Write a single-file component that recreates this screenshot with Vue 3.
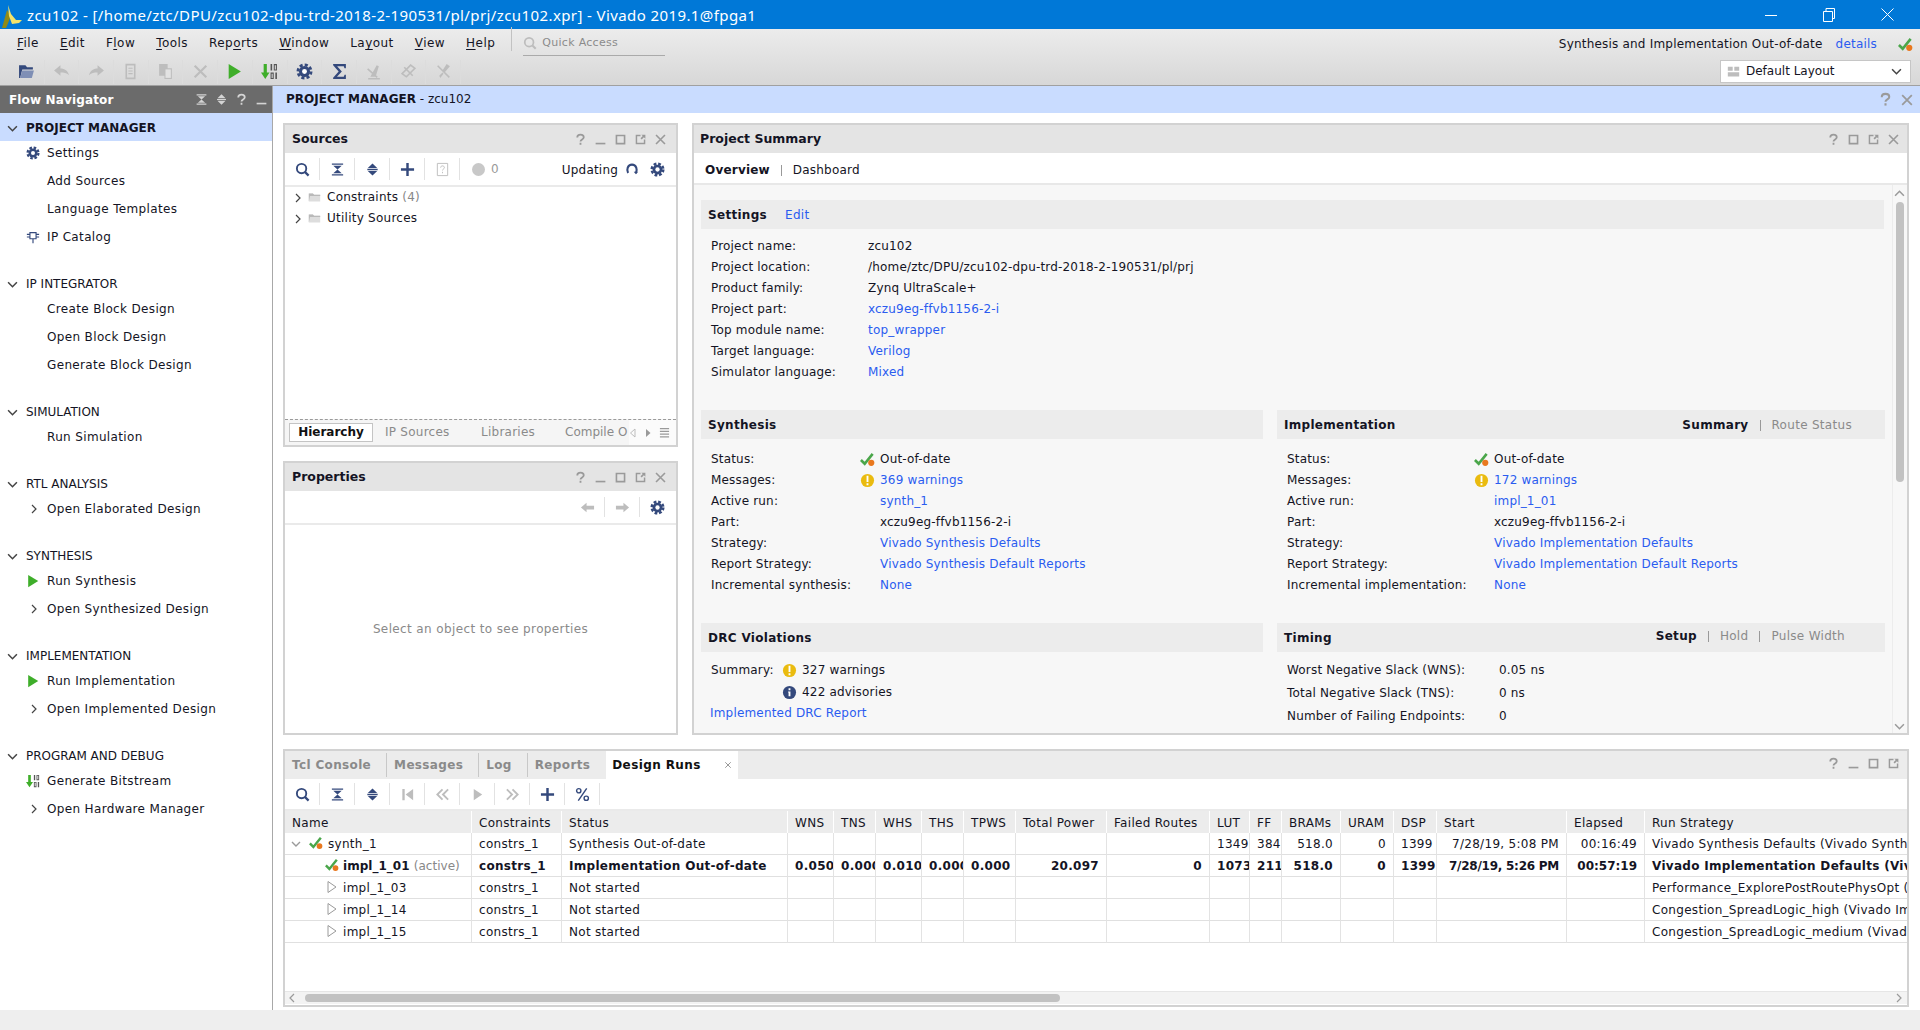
<script setup>
const menus = [
  ['', 'F', 'ile'], ['', 'E', 'dit'], ['F', 'l', 'ow'], ['', 'T', 'ools'], ['Rep', 'o', 'rts'],
  ['', 'W', 'indow'], ['La', 'y', 'out'], ['', 'V', 'iew'], ['', 'H', 'elp']
]
const tools = [
  ['folder2', 'navy'], ['undo', 'mute'], ['redo', 'mute'], ['copy', 'mute'], ['paste', 'mute'], ['close', 'mute'],
  ['play', 'green'], ['bits', 'green'], ['gear', 'navy'], ['sigma', 'navy'], ['tool1', 'mute'], ['tool2', 'mute'], ['tool3', 'mute']
]
const nav = [
  { title: 'PROJECT MANAGER', active: true, items: [
    { label: 'Settings', icon: 'gear', cls: 'navy' }, { label: 'Add Sources' }, { label: 'Language Templates' },
    { label: 'IP Catalog', icon: 'ip', cls: 'navy' }] },
  { title: 'IP INTEGRATOR', items: [{ label: 'Create Block Design' }, { label: 'Open Block Design' }, { label: 'Generate Block Design' }] },
  { title: 'SIMULATION', items: [{ label: 'Run Simulation' }] },
  { title: 'RTL ANALYSIS', items: [{ label: 'Open Elaborated Design', chev: true }] },
  { title: 'SYNTHESIS', items: [{ label: 'Run Synthesis', icon: 'play', cls: 'green' }, { label: 'Open Synthesized Design', chev: true }] },
  { title: 'IMPLEMENTATION', items: [{ label: 'Run Implementation', icon: 'play', cls: 'green' }, { label: 'Open Implemented Design', chev: true }] },
  { title: 'PROGRAM AND DEBUG', items: [{ label: 'Generate Bitstream', icon: 'bits', cls: 'green' }, { label: 'Open Hardware Manager', chev: true }] }
]
const settings = [
  ['Project name:', 'zcu102'],
  ['Project location:', '/home/ztc/DPU/zcu102-dpu-trd-2018-2-190531/pl/prj'],
  ['Product family:', 'Zynq UltraScale+'],
  ['Project part:', 'xczu9eg-ffvb1156-2-i', true],
  ['Top module name:', 'top_wrapper', true],
  ['Target language:', 'Verilog', true],
  ['Simulator language:', 'Mixed', true]
]
const synth = [
  ['Status:', 'Out-of-date', false, 'check'],
  ['Messages:', '369 warnings', true, 'warn'],
  ['Active run:', 'synth_1', true],
  ['Part:', 'xczu9eg-ffvb1156-2-i'],
  ['Strategy:', 'Vivado Synthesis Defaults', true],
  ['Report Strategy:', 'Vivado Synthesis Default Reports', true],
  ['Incremental synthesis:', 'None', true]
]
const impl = [
  ['Status:', 'Out-of-date', false, 'check'],
  ['Messages:', '172 warnings', true, 'warn'],
  ['Active run:', 'impl_1_01', true],
  ['Part:', 'xczu9eg-ffvb1156-2-i'],
  ['Strategy:', 'Vivado Implementation Defaults', true],
  ['Report Strategy:', 'Vivado Implementation Default Reports', true],
  ['Incremental implementation:', 'None', true]
]
const timing = [
  ['Worst Negative Slack (WNS):', '0.05 ns'],
  ['Total Negative Slack (TNS):', '0 ns'],
  ['Number of Failing Endpoints:', '0']
]
const cols = [187, 90, 226, 46, 42, 46, 42, 52, 91, 103, 40, 32, 59, 53, 43, 130, 78, 270]
const heads = ['Name', 'Constraints', 'Status', 'WNS', 'TNS', 'WHS', 'THS', 'TPWS', 'Total Power', 'Failed Routes', 'LUT', 'FF', 'BRAMs', 'URAM', 'DSP', 'Start', 'Elapsed', 'Run Strategy']
const rightCols = new Set([3, 4, 5, 6, 7, 8, 9, 10, 11, 12, 13, 14, 15, 16])
const runs = [
  { name: 'synth_1', kind: 'synth', vals: ['constrs_1', 'Synthesis Out-of-date', '', '', '', '', '', '', '', '1349', '384', '518.0', '0', '1399', '7/28/19, 5:08 PM', '00:16:49', 'Vivado Synthesis Defaults (Vivado Synthesis 2019)'] },
  { name: 'impl_1_01', kind: 'active', vals: ['constrs_1', 'Implementation Out-of-date', '0.050', '0.000', '0.010', '0.000', '0.000', '20.097', '0', '1073', '211', '518.0', '0', '1399', '7/28/19, 5:26 PM', '00:57:19', 'Vivado Implementation Defaults (Vivado Implementation 2019)'] },
  { name: 'impl_1_03', kind: 'idle', vals: ['constrs_1', 'Not started', '', '', '', '', '', '', '', '', '', '', '', '', '', '', 'Performance_ExplorePostRoutePhysOpt (Vivado Implementation 2019)'] },
  { name: 'impl_1_14', kind: 'idle', vals: ['constrs_1', 'Not started', '', '', '', '', '', '', '', '', '', '', '', '', '', '', 'Congestion_SpreadLogic_high (Vivado Implementation 2019)'] },
  { name: 'impl_1_15', kind: 'idle', vals: ['constrs_1', 'Not started', '', '', '', '', '', '', '', '', '', '', '', '', '', '', 'Congestion_SpreadLogic_medium (Vivado Implementation 2019)'] }
]
const runTools = [
  ['search', 'navy'], ['collapse', 'navy'], ['expand', 'navy'], ['first', 'mute'], ['rew', 'mute'], ['playo', 'mute'], ['ffw', 'mute'], ['plus', 'navy'], ['percent', 'navy']
]
const srcTools = [['search', 'navy'], ['collapse', 'navy'], ['expand', 'navy'], ['plus', 'navy'], ['docq', 'mute']]
</script>

<template>
  <div class="app">
    <svg class="defs" aria-hidden="true">
      <symbol id="search" viewBox="0 0 16 16"><circle cx="7" cy="7" r="5" fill="none" stroke="currentColor" stroke-width="2"/><path d="M10.5 10.5L14.5 14.5" stroke="currentColor" stroke-width="2.4"/></symbol>
      <symbol id="collapse" viewBox="0 0 16 16"><path fill="currentColor" d="M2 1.5h12V3H2zM3.5 4h9L8 8zM8 8l4.5 4h-9zM2 13h12v1.5H2z"/></symbol>
      <symbol id="expand" viewBox="0 0 16 16"><path fill="currentColor" d="M8 1.5L13 6.5H3zM2.5 7.3h11v1.4h-11zM3 9.5h10L8 14.5z"/></symbol>
      <symbol id="plus" viewBox="0 0 16 16"><path fill="currentColor" d="M6.7 1h2.6v5.7H15v2.6H9.3V15H6.7V9.3H1V6.7h5.7z"/></symbol>
      <symbol id="gear" viewBox="0 0 16 16"><circle cx="8" cy="8" r="5.2" fill="currentColor"/><circle cx="8" cy="8" r="6.2" fill="none" stroke="currentColor" stroke-width="2.6" stroke-dasharray="2.9 1.97"/><circle cx="8" cy="8" r="2.3" fill="#fff"/></symbol>
      <symbol id="ip" viewBox="0 0 16 16"><path fill="none" stroke="currentColor" stroke-width="1.3" d="M4.5 3h7v7h-7zM8 10v5M1 5h3.500M1 8h3.500M11.500 5H15M11.500 8H15"/></symbol>
      <symbol id="play" viewBox="0 0 16 16"><path fill="currentColor" d="M2.500 1L14 8L2.500 15z"/></symbol>
      <symbol id="playo" viewBox="0 0 16 16"><path fill="currentColor" d="M4 2l9 6-9 6z"/></symbol>
      <symbol id="bits" viewBox="0 0 16 16"><path fill="currentColor" d="M2.500 1h3v8H8l-4 6-4-6h2.500z"/><path fill="#555" d="M9 1h1.500v6H9zM12 1h3v6h-3zM13 2v4h1V2zM9 9h3v6H9zM10 10v4h1v-4zM13.500 9H15v6h-1.500z"/></symbol>
      <symbol id="sigma" viewBox="0 0 16 16"><path fill="currentColor" d="M2 1h12v4h-1.300l-.7-2H5.800l4.400 5-4.600 5H12l.8-2H14v4H2v-1.200L7.200 8 2 2.200z"/></symbol>
      <symbol id="undo" viewBox="0 0 16 16"><path fill="currentColor" d="M1 7l6-5v3.200c4 0 7 2 8 6.300C13 9.500 10 9 7 9v3z"/></symbol>
      <symbol id="redo" viewBox="0 0 16 16"><path fill="currentColor" d="M15 7L9 2v3.200c-4 0-7 2-8 6.300C3 9.500 6 9 9 9v3z"/></symbol>
      <symbol id="copy" viewBox="0 0 16 16"><path fill="none" stroke="currentColor" stroke-width="1.500" d="M4 1.500h8v13H4z"/><path stroke="currentColor" d="M6 5h4M6 7.500h4M6 10h4"/></symbol>
      <symbol id="paste" viewBox="0 0 16 16"><path fill="currentColor" d="M2 1h8v4h4v10H7v-3H2z"/><path fill="#e2e2e2" d="M8 6h5v8H8z"/></symbol>
      <symbol id="close" viewBox="0 0 16 16"><path stroke="currentColor" stroke-width="2" fill="none" d="M2.500 2.500l11 11M13.500 2.500l-11 11"/></symbol>
      <symbol id="tool1" viewBox="0 0 16 16"><path fill="currentColor" d="M3 14h11v1.500H3zM5 13L11 2l2 1-3 10zM3 5l9 8-1 1-9-8z"/></symbol>
      <symbol id="tool2" viewBox="0 0 16 16"><path fill="none" stroke="currentColor" stroke-width="1.500" d="M2 10L10 2l4 3-8 8zM4 4l8 8"/></symbol>
      <symbol id="tool3" viewBox="0 0 16 16"><path fill="currentColor" d="M2 3l1-1 11 11-1 1zM11 1l3 2-5 6-2-2zM4 12l3-3 1 1-3 4z"/></symbol>
      <symbol id="help" viewBox="0 0 16 16"><path fill="none" stroke="currentColor" stroke-width="2.200" d="M4 5.500C4 3 5.800 2 8 2s4 1.200 4 3.300c0 2.700-4 2.500-4 5.200"/><path stroke="currentColor" stroke-width="2.200" d="M8 12v2.500"/></symbol>
      <symbol id="min" viewBox="0 0 16 16"><path fill="currentColor" d="M2 12h12v2H2z"/></symbol>
      <symbol id="max" viewBox="0 0 16 16"><path fill="none" stroke="currentColor" stroke-width="2" d="M3 3h10v10H3z"/></symbol>
      <symbol id="pop" viewBox="0 0 16 16"><path fill="none" stroke="currentColor" stroke-width="1.800" d="M8 3H3v10h10V8"/><path fill="currentColor" d="M9 2h5v5l-1.800-1.800L9.500 8 8 6.500l2.800-2.700z"/></symbol>
      <symbol id="check" viewBox="0 0 16 16"><path fill="none" stroke="#4aa64a" stroke-width="2.800" d="M1 8.500l4 4L13.500 2"/><circle cx="12" cy="11.500" r="3.300" fill="#e9781e"/></symbol>
      <symbol id="warn" viewBox="0 0 16 16"><circle cx="8" cy="8" r="7" fill="#eabb0f"/><path fill="#fff" d="M7 3h2v6.500H7zM7 11h2v2H7z"/></symbol>
      <symbol id="info" viewBox="0 0 16 16"><circle cx="8" cy="8" r="7" fill="#34497c"/><path fill="#fff" d="M7 3.500h2v2H7zM6.500 7H9v5H7V8h-.5z"/></symbol>
      <symbol id="folder" viewBox="0 0 16 16"><path fill="#ddd" d="M1 3h5l1.500 1.500H15V13H1z"/><path fill="#b9b9b9" d="M1 3h5l1.500 1.500H15V6H2.500L1 13z"/></symbol>
      <symbol id="folder2" viewBox="0 0 16 16"><path fill="#34497c" d="M1 2h6l1.500 2H14v2H4L2 14H1z"/><path fill="#7f8fb5" d="M4 7h11l-2 7H2z"/></symbol>
      <symbol id="chevr" viewBox="0 0 10 10"><path fill="none" stroke="currentColor" stroke-width="1.200" d="M3 1l4 4-4 4"/></symbol>
      <symbol id="chevd" viewBox="0 0 10 10"><path fill="none" stroke="currentColor" stroke-width="1.400" d="M1 3l4 4 4-4"/></symbol>
      <symbol id="chevu" viewBox="0 0 10 10"><path fill="none" stroke="currentColor" stroke-width="1.400" d="M1 7l4-4 4 4"/></symbol>
      <symbol id="first" viewBox="0 0 16 16"><path fill="currentColor" d="M2.500 2H5v12H2.500zM14 2v12L6 8z"/></symbol>
      <symbol id="rew" viewBox="0 0 16 16"><path fill="none" stroke="currentColor" stroke-width="2" d="M8 2.500L2.500 8 8 13.500M14 2.500L8.500 8l5.500 5.500"/></symbol>
      <symbol id="ffw" viewBox="0 0 16 16"><path fill="none" stroke="currentColor" stroke-width="2" d="M2 2.500L7.500 8 2 13.500M8 2.500L13.500 8 8 13.500"/></symbol>
      <symbol id="percent" viewBox="0 0 16 16"><path stroke="currentColor" stroke-width="1.500" d="M12.500 1.500L3.500 14.500"/><circle cx="4" cy="4" r="2.300" fill="none" stroke="currentColor" stroke-width="1.500"/><circle cx="12" cy="12" r="2.300" fill="none" stroke="currentColor" stroke-width="1.500"/></symbol>
      <symbol id="docq" viewBox="0 0 16 16"><path fill="none" stroke="currentColor" d="M2.500 1.500h11v13h-11z"/><path fill="none" stroke="currentColor" d="M6 6c0-2.500 4-2.500 4 0 0 1.500-2 1.500-2 3M8 10.500v1.500"/></symbol>
      <symbol id="refresh" viewBox="0 0 16 16"><path fill="none" stroke="currentColor" stroke-width="2.400" d="M3.500 12.500C1.500 9 3 3 8 3s6.500 6 4.500 9.500"/><path fill="currentColor" d="M10 11h5l-2.500 3z"/></symbol>
      <symbol id="left" viewBox="0 0 16 16"><path fill="currentColor" d="M1 8l6-5v3h8v4H7v3z"/></symbol>
      <symbol id="right" viewBox="0 0 16 16"><path fill="currentColor" d="M15 8L9 3v3H1v4h8v3z"/></symbol>
      <symbol id="layout" viewBox="0 0 16 16"><path fill="currentColor" d="M1 2h6v5H1zM9 2h6v5H9zM1 9h14v5H1z"/></symbol>
      <symbol id="menu" viewBox="0 0 12 12"><path fill="currentColor" d="M1 1h10v1.500H1zM1 4h10v1.500H1zM1 7h10v1.500H1zM1 10h10v1.500H1z"/></symbol>
    </svg>

    <header class="title">
      <svg class="logo" width="22" height="24" viewBox="0 0 22 24"><path fill="#8f8a17" d="M1 24L6 6l4 6-5 12z"/><path fill="#f3e36a" d="M7 1l3 9 5 6h6l-3 3-7 1-3-8z"/></svg>
      <span class="title-text">zcu102 - [/home/ztc/DPU/zcu102-dpu-trd-2018-2-190531/pl/prj/zcu102.xpr] - Vivado 2019.1@fpga1</span>
      <div class="winbtns">
        <svg width="12" height="12" viewBox="0 0 12 12"><path d="M0 6.500h12" stroke="#fff"/></svg>
        <svg width="12" height="14" viewBox="0 0 12 14"><path fill="none" stroke="#fff" d="M.5 3.500h9v10h-9zM3 3.500V.5h8.500v10H9.500"/></svg>
        <svg width="13" height="13" viewBox="0 0 13 13"><path fill="none" stroke="#fff" d="M.5.5l12 12M12.500.5l-12 12"/></svg>
      </div>
    </header>

    <div class="topbar">
      <div class="top-left">
        <div class="menu-row">
          <span v-for="m in menus" :key="m[1]+m[2]" class="menu-item">{{ m[0] }}<u>{{ m[1] }}</u>{{ m[2] }}</span>
          <div class="quick"><svg class="ic mute" width="14" height="14"><use href="#search"/></svg><span>Quick Access</span></div>
        </div>
        <div class="tool-row">
          <span v-for="t in tools" :key="t[0]" class="tbtn wide" :class="'sep-' + t[1]"><svg class="ic" :class="t[1]" width="16" height="16"><use :href="'#' + t[0]"/></svg></span>
        </div>
      </div>
      <div class="top-right">
        <div class="status-line"><span>Synthesis and Implementation Out-of-date</span><a>details</a><svg width="15" height="15"><use href="#check"/></svg></div>
        <div class="layout-combo"><svg class="ic mute" width="13" height="13"><use href="#layout"/></svg><span>Default Layout</span><svg class="ic dark combo-chev" width="11" height="11"><use href="#chevd"/></svg></div>
      </div>
    </div>

    <div class="main">
      <aside class="nav">
        <div class="nav-head">
          <b>Flow Navigator</b>
          <div class="icons light"><svg v-for="i in ['collapse','expand','help','min']" :key="i" width="13" height="13"><use :href="'#' + i"/></svg></div>
        </div>
        <section v-for="g in nav" :key="g.title" class="nav-group">
          <div class="nav-title" :class="{ active: g.active }"><svg class="ic dark" width="11" height="11"><use href="#chevd"/></svg><span>{{ g.title }}</span></div>
          <div v-for="it in g.items" :key="it.label" class="nav-item">
            <span class="nav-ic">
              <svg v-if="it.icon" class="ic" :class="it.cls" width="14" height="14"><use :href="'#' + it.icon"/></svg>
              <svg v-else-if="it.chev" class="ic dark chev-small" width="10" height="10"><use href="#chevr"/></svg>
            </span>
            <span>{{ it.label }}</span>
          </div>
        </section>
      </aside>

      <section class="work">
        <div class="work-head">
          <span><b>PROJECT MANAGER</b> - zcu102</span>
          <div class="icons grey wh-ic"><svg width="15" height="15"><use href="#help"/></svg><svg width="14" height="14"><use href="#close"/></svg></div>
        </div>
        <div class="work-body">
          <div class="upper">
            <div class="left-col">
              <div class="panel sources">
                <div class="p-head"><b>Sources</b><div class="icons grey"><svg v-for="i in ['help','min','max','pop','close']" :key="i" width="13" height="13"><use :href="'#' + i"/></svg></div></div>
                <div class="p-tools">
                  <span v-for="t in srcTools" :key="t[0]" class="tbtn"><svg class="ic" :class="t[1]" width="15" height="15"><use :href="'#' + t[0]"/></svg></span>
                  <span class="dot"></span><span class="zero">0</span>
                  <span class="updating">Updating</span>
                  <svg class="ic navy" width="14" height="14"><use href="#refresh"/></svg>
                  <svg class="ic navy gear-r" width="15" height="15"><use href="#gear"/></svg>
                </div>
                <div class="tree">
                  <div class="tree-row"><svg class="ic dark" width="10" height="10"><use href="#chevr"/></svg><svg width="13" height="13"><use href="#folder"/></svg><span>Constraints <i>(4)</i></span></div>
                  <div class="tree-row"><svg class="ic dark" width="10" height="10"><use href="#chevr"/></svg><svg width="13" height="13"><use href="#folder"/></svg><span>Utility Sources</span></div>
                </div>
                <div class="src-tabs">
                  <span class="src-tab on">Hierarchy</span>
                  <span class="src-tab t2">IP Sources</span>
                  <span class="src-tab t3">Libraries</span>
                  <span class="src-tab t4">Compile O</span>
                  <div class="src-arrows">
                    <svg class="ic mute" width="8" height="10" viewBox="0 0 8 10"><path fill="none" stroke="currentColor" d="M6 1L1.500 5 6 9z"/></svg>
                    <svg class="ic grey" width="8" height="10" viewBox="0 0 8 10"><path fill="currentColor" d="M2 1l4.500 4L2 9z"/></svg>
                    <svg class="ic grey" width="11" height="11"><use href="#menu"/></svg>
                  </div>
                </div>
              </div>
              <div class="panel props">
                <div class="p-head"><b>Properties</b><div class="icons grey"><svg v-for="i in ['help','min','max','pop','close']" :key="i" width="13" height="13"><use :href="'#' + i"/></svg></div></div>
                <div class="p-tools prop-tools">
                  <span class="tbtn"><svg class="ic mute" width="15" height="15"><use href="#left"/></svg></span>
                  <span class="tbtn"><svg class="ic mute" width="15" height="15"><use href="#right"/></svg></span>
                  <svg class="ic navy gear-p" width="15" height="15"><use href="#gear"/></svg>
                </div>
                <div class="prop-empty">Select an object to see properties</div>
              </div>
            </div>

            <div class="panel summary">
              <div class="p-head sum-head"><b>Project Summary</b><div class="icons grey"><svg v-for="i in ['help','max','pop','close']" :key="i" width="13" height="13"><use :href="'#' + i"/></svg></div></div>
              <div class="sum-tabs"><b>Overview</b><span class="pipe"></span><span>Dashboard</span></div>
              <div class="sum-body">
                <div class="sum-content">
                  <div class="s-head"><b>Settings</b><a class="edit">Edit</a></div>
                  <div class="kv settings">
                    <template v-for="r in settings" :key="r[0]"><span>{{ r[0] }}</span><a v-if="r[2]">{{ r[1] }}</a><span v-else>{{ r[1] }}</span></template>
                  </div>
                  <div class="two">
                    <div>
                      <div class="s-head"><b>Synthesis</b></div>
                      <div class="kv3 syn">
                        <template v-for="r in synth" :key="r[0]"><span>{{ r[0] }}</span><span class="kic"><svg v-if="r[3]" width="15" height="15"><use :href="'#' + r[3]"/></svg></span><a v-if="r[2]">{{ r[1] }}</a><span v-else>{{ r[1] }}</span></template>
                      </div>
                    </div>
                    <div>
                      <div class="s-head"><b>Implementation</b><div class="s-tabs p33"><b>Summary</b><span class="pipe"></span><span class="g">Route Status</span></div></div>
                      <div class="kv3 imp">
                        <template v-for="r in impl" :key="r[0]"><span>{{ r[0] }}</span><span class="kic"><svg v-if="r[3]" width="15" height="15"><use :href="'#' + r[3]"/></svg></span><a v-if="r[2]">{{ r[1] }}</a><span v-else>{{ r[1] }}</span></template>
                      </div>
                    </div>
                    <div class="low">
                      <div class="s-head"><b>DRC Violations</b></div>
                      <div class="drc">
                        <span>Summary:</span><span class="kic"><svg width="15" height="15"><use href="#warn"/></svg></span><span>327 warnings</span>
                        <span></span><span class="kic"><svg width="15" height="15"><use href="#info"/></svg></span><span>422 advisories</span>
                      </div>
                      <a class="drc-link">Implemented DRC Report</a>
                    </div>
                    <div class="low">
                      <div class="s-head"><b>Timing</b><div class="s-tabs p40 up"><b>Setup</b><span class="pipe"></span><span class="g">Hold</span><span class="pipe"></span><span class="g">Pulse Width</span></div></div>
                      <div class="tim">
                        <template v-for="r in timing" :key="r[0]"><span>{{ r[0] }}</span><span>{{ r[1] }}</span></template>
                      </div>
                    </div>
                  </div>
                </div>
                <div class="vscroll">
                  <svg class="ic grey" width="11" height="11"><use href="#chevu"/></svg>
                  <div class="vthumb"></div>
                  <svg class="ic grey vdown" width="11" height="11"><use href="#chevd"/></svg>
                </div>
              </div>
            </div>
          </div>

          <div class="panel runs">
            <div class="run-tabs">
              <span class="rt">Tcl Console</span><span class="rt">Messages</span><span class="rt">Log</span><span class="rt last">Reports</span>
              <span class="rt cur">Design Runs<svg class="ic grey" width="8" height="8"><use href="#close"/></svg></span>
              <div class="icons grey run-ic"><svg v-for="i in ['help','min','max','pop']" :key="i" width="13" height="13"><use :href="'#' + i"/></svg></div>
            </div>
            <div class="p-tools run-tools">
              <span v-for="t in runTools" :key="t[0]" class="tbtn"><svg class="ic" :class="t[1]" width="15" height="15"><use :href="'#' + t[0]"/></svg></span>
            </div>
            <div class="table-wrap">
              <table>
                <colgroup><col v-for="(c, i) in cols" :key="i" :style="{ width: c + 'px' }"></colgroup>
                <thead><tr><th v-for="h in heads" :key="h">{{ h }}</th></tr></thead>
                <tbody>
                  <tr v-for="r in runs" :key="r.name" :class="[{ bold: r.kind === 'active' }, 'k-' + r.kind]">
                    <td class="namecell">
                      <template v-if="r.kind === 'synth'">
                        <svg class="ic grey c1" width="10" height="10"><use href="#chevd"/></svg><svg class="c2" width="14" height="14"><use href="#check"/></svg>{{ r.name }}
                      </template>
                      <template v-else-if="r.kind === 'active'">
                        <svg class="c3" width="14" height="14"><use href="#check"/></svg>{{ r.name }} <span class="act">(active)</span>
                      </template>
                      <template v-else>
                        <svg class="c3 ic grey" width="14" height="14" viewBox="0 0 14 14"><path fill="none" stroke="currentColor" d="M3 1.500l8 5.500-8 5.500z"/></svg>{{ r.name }}
                      </template>
                    </td>
                    <td v-for="(v, i) in r.vals" :key="i" :class="{ num: rightCols.has(i + 1) }">{{ v }}</td>
                  </tr>
                </tbody>
              </table>
            </div>
            <div class="hscroll">
              <svg class="ic grey" width="10" height="10" viewBox="0 0 10 10"><path fill="none" stroke="currentColor" stroke-width="1.200" d="M7 1L3 5l4 4"/></svg>
              <div class="hthumb"></div>
              <svg class="ic grey hright" width="10" height="10"><use href="#chevr"/></svg>
            </div>
          </div>
        </div>
      </section>
    </div>
    <footer class="foot"></footer>
  </div>
</template>

<style>
html, body { margin: 0; background: #fff; }
</style>

<style scoped>
.app { width: 1920px; height: 1030px; overflow: hidden; display: flex; flex-direction: column; font: 12px/1.2 "DejaVu Sans", sans-serif; color: #141424; position: relative; }
.defs { position: absolute; width: 0; height: 0; }
a { color: #2a5cf0; }
b { font-weight: 700; }
svg { flex: none; display: block; }
.navy { color: #34497c; }
.mute { color: #bdbdbd; }
.grey { color: #9a9a9a; }
.green { color: #3fae2a; }
.dark { color: #444; }
.title { height: 29px; flex: none; background: #0078d7; color: #fff; display: flex; align-items: center; }
.logo { margin: 2px 4px 0 1px; }
.title-text { font: 15px "Noto Sans", sans-serif; letter-spacing: .4px; }
.winbtns { margin-left: auto; display: flex; align-items: center; gap: 46px; padding-right: 26px; }
.topbar { height: 57px; flex: none; box-sizing: border-box; border-bottom: 1px solid #a0a0a0; background: linear-gradient(#ececec, #d7d7d7); display: flex; justify-content: space-between; }
.menu-row { height: 29px; display: flex; align-items: center; padding-left: 17px; gap: 21px; letter-spacing: .45px; }
.menu-item u { text-decoration-thickness: 1px; text-underline-offset: 2px; }
.quick { margin-left: 7px; border-bottom: 1px solid #aaa; width: 142px; height: 24px; display: flex; align-items: center; gap: 5px; color: #8b8b8b; font-size: 11px; position: relative; letter-spacing: .3px; }
.quick::before { content: ""; position: absolute; left: -12px; top: -4px; height: 24px; width: 1px; background: #c2c2c2; }
.tool-row { height: 27px; display: flex; align-items: center; padding-left: 10px; }
.tbtn { width: 35px; height: 24px; flex: none; box-sizing: border-box; display: flex; align-items: center; justify-content: center; border-right: 1px solid #e2e2e2; }
.tool-row .tbtn { width: 34.7px; border-right-color: #dcdcdc; }
.tool-row .tbtn svg { width: 17px; height: 17px; }
.top-right { padding: 4px 9px 0 0; display: flex; flex-direction: column; align-items: flex-end; }
.status-line { height: 22px; display: flex; align-items: center; font-size: 12px; letter-spacing: .2px; margin-right: -2px; }
.status-line a { margin-left: 13px; margin-right: 21px; }
.layout-combo { margin-top: 5px; width: 191px; height: 23px; box-sizing: border-box; background: #fff; border: 1px solid #c6c6c6; display: flex; align-items: center; padding-left: 6px; gap: 6px; }
.combo-chev { margin-left: auto; margin-right: 8px; }
.main { flex: 1; display: flex; min-height: 0; }
.nav { width: 273px; flex: none; box-sizing: border-box; border-right: 1px solid #a8a8a8; font-size: 12px; letter-spacing: .35px; }
.nav-head { height: 27px; box-sizing: border-box; background: #6b6b6b; color: #fff; display: flex; align-items: center; padding-left: 9px; justify-content: space-between; font-size: 12px; letter-spacing: .15px; }
.nav-head b { margin-top: 2px; }
.icons { display: flex; align-items: center; }
.light { color: #d4d4d4; gap: 7px; padding-right: 4px; }
.nav-group { margin-bottom: 20px; }
.nav-title { height: 24px; box-sizing: border-box; padding-top: 2px; display: flex; align-items: center; padding-left: 7px; gap: 8px; letter-spacing: 0; }
.nav-title.active { height: 28px; margin-bottom: -2px; background: #c9dcff; font-weight: 700; letter-spacing: 0; }
.nav-item { height: 28px; display: flex; align-items: center; }
.nav-ic { width: 47px; flex: none; display: flex; justify-content: flex-start; padding-left: 26px; box-sizing: border-box; }
.chev-small { margin-left: 3px; }
.work { flex: 1; min-width: 0; display: flex; flex-direction: column; }
.work-head { height: 27px; flex: none; background: #c9dcff; display: flex; align-items: center; justify-content: space-between; padding-left: 13px; }
.wh-ic { gap: 7px; padding-right: 6px; }
.work-body { flex: 1; min-height: 0; padding: 10px 11px 3px 10px; display: flex; flex-direction: column; gap: 14px; }
.upper { height: 612px; flex: none; display: flex; gap: 14px; }
.left-col { width: 395px; flex: none; display: flex; flex-direction: column; gap: 14px; }
.panel { box-sizing: border-box; border: 2px solid #d2d2d2; display: flex; flex-direction: column; background: #fff; min-width: 0; }
.sources { height: 324px; flex: none; }
.props { flex: 1; }
.summary { flex: 1; }
.p-head { height: 28px; flex: none; background: #e4e4e4; display: flex; align-items: center; justify-content: space-between; padding-left: 7px; padding-right: 9px; font-size: 12.5px; }
.sum-head { padding-left: 6px; padding-right: 7px; }
.p-head b { margin-bottom: 2px; }
.p-head .icons { gap: 7px; }
.p-tools { height: 34px; flex: none; box-sizing: border-box; border-bottom: 2px solid #eaeaea; display: flex; align-items: center; padding-left: 0; }
.p-tools .tbtn { height: 22px; }
.dot { width: 13px; height: 13px; border-radius: 50%; background: #c8c8c8; margin-left: 12px; }
.zero { margin-left: 6px; color: #999; }
.updating { margin-left: auto; margin-right: 7px; margin-top: 2px; letter-spacing: .2px; }
.gear-r { margin: 0 11px 0 11px; }
.tree { flex: 1; }
.tree-row { height: 21px; display: flex; align-items: center; padding-left: 8px; gap: 5px; letter-spacing: .25px; }
.tree-row i { font-style: normal; color: #888; }
.tree-row span { margin-left: 1px; }
.src-tabs { height: 26px; flex: none; box-sizing: border-box; border-top: 1px dashed #9a9a9a; background: #f5f5f5; display: flex; align-items: center; position: relative; color: #8a8a8a; overflow: hidden; }
.src-tab { position: absolute; top: 5px; letter-spacing: .25px; }
.src-tab.on { left: 4px; top: 3px; width: 84px; height: 19px; box-sizing: border-box; border: 1px solid #c4c4c4; background: #fff; color: #111; font-weight: 700; text-align: center; line-height: 17px; letter-spacing: 0; }
.t2 { left: 100px; } .t3 { left: 196px; } .t4 { left: 280px; letter-spacing: 0; }
.src-arrows { position: absolute; right: 0; top: 0; bottom: 0; width: 47px; background: #fbfbfb; display: flex; align-items: center; gap: 7px; padding-left: 0; box-sizing: border-box; }
.prop-tools { justify-content: flex-end; padding-right: 11px; }
.prop-tools .tbtn { height: 20px; }
.gear-p { margin-left: 10px; }
.prop-empty { flex: 1; display: flex; align-items: center; justify-content: center; color: #8a8a8a; letter-spacing: .38px; }
.sum-tabs { height: 30px; flex: none; box-sizing: border-box; display: flex; align-items: center; padding-left: 11px; padding-top: 4px; letter-spacing: .2px; }
.pipe { width: 1px; height: 11px; background: #999; margin: 0 11px; flex: none; }
.sum-body { flex: 1; min-height: 0; background: #f7f7f7; border-top: 2px solid #e8e8e8; display: flex; overflow: hidden; }
.sum-content { flex: 1; min-width: 0; padding: 15px 8px 0 7px; letter-spacing: .18px; }
.s-head { height: 29px; box-sizing: border-box; padding-top: 2px; background: #ececec; display: flex; align-items: center; padding-left: 7px; letter-spacing: .3px; }
.edit { margin-left: 18px; }
.s-tabs { margin-left: auto; display: flex; align-items: center; }
.s-tabs .g { color: #8a8a8a; }
.p33 { padding-right: 33px; }
.p40 { padding-right: 40px; }
.up { padding-bottom: 4px; }
.kv { display: grid; grid-template-columns: 157px 1fr; grid-auto-rows: 21px; align-items: center; padding: 7px 0 0 10px; height: 174px; box-sizing: content-box; }
.kv3 { display: grid; grid-auto-rows: 21px; align-items: center; padding: 10px 0 0 10px; height: 174px; }
.syn { grid-template-columns: 149px 20px 1fr; }
.imp { grid-template-columns: 187px 20px 1fr; }
.kic { display: flex; }
.two { display: grid; grid-template-columns: 562px 608px; column-gap: 14px; }
.low { height: 110px; }
.drc { display: grid; grid-template-columns: 71px 20px 1fr; grid-auto-rows: 22px; align-items: center; padding: 7px 0 0 10px; }
.drc-link { display: block; margin: 0 0 0 9px; height: 21px; line-height: 21px; }
.tim { display: grid; grid-template-columns: 212px 1fr; grid-auto-rows: 23px; align-items: center; padding: 7px 0 0 10px; }
.vscroll { width: 13px; flex: none; border-left: 1px solid #ececec; background: #f7f7f7; margin-right: 1px; display: flex; flex-direction: column; align-items: center; padding-top: 3px; padding-bottom: 1px; }
.vthumb { width: 8px; height: 280px; margin-top: 3px; background: #c2c2c2; border-radius: 4px; }
.vdown { margin-top: auto; }
.runs { flex: 1; min-height: 0; }
.run-tabs { height: 28px; flex: none; background: #ececec; display: flex; align-items: stretch; color: #8a8a8a; font-weight: 600; position: relative; letter-spacing: .35px; }
.rt { display: flex; align-items: center; padding: 0 15px 0 7px; border-right: 1px solid #c8c8c8; margin: 2px 0; }
.rt.last { border-right: none; padding-right: 16px; }
.rt.cur { margin: 0; background: #fff; color: #111; border: none; font-weight: 700; padding: 0 6px; gap: 23px; letter-spacing: .4px; }
.run-ic { position: absolute; right: 7px; top: 6px; gap: 7px; }
.run-tools { height: 32px; }
.table-wrap { flex: 1; min-height: 0; overflow: hidden; }
table { table-layout: fixed; border-collapse: separate; border-spacing: 0; width: 1630px; letter-spacing: .3px; }
th { height: 22px; background: #ececec; font-weight: 400; text-align: left; padding: 3px 7px 0; border-right: 1px solid #fff; overflow: hidden; white-space: nowrap; box-sizing: border-box; }
td { height: 22px; box-sizing: border-box; padding: 1px 7px 0; border-right: 1px solid #e3e3e3; border-bottom: 1px solid #e0e0e0; overflow: hidden; white-space: nowrap; }
td.num { text-align: right; }
.bold td { font-weight: 700; }
.bold td:nth-child(16) { letter-spacing: -.25px; }
.bold td:nth-child(17) { letter-spacing: 0; }
.namecell { position: relative; padding-left: 58px; }
.bold .namecell { letter-spacing: .02px; }
.k-synth .namecell { padding-left: 43px; }
.c1 { position: absolute; left: 6px; top: 6px; }
.c2 { position: absolute; left: 24px; top: 3px; }
.c3 { position: absolute; left: 40px; top: 3px; }
.act { font-weight: 400; color: #888; }
.hscroll { height: 12px; flex: none; background: #f3f3f3; margin-bottom: 1px; display: flex; align-items: center; padding-left: 2px; border-top: 1px solid #e6e6e6; }
.hthumb { margin-left: 8px; width: 755px; height: 8px; border-radius: 4px; background: #c2c2c2; }
.hright { margin-left: auto; margin-right: 3px; }
.foot { height: 20px; flex: none; background: #eee; }
</style>
